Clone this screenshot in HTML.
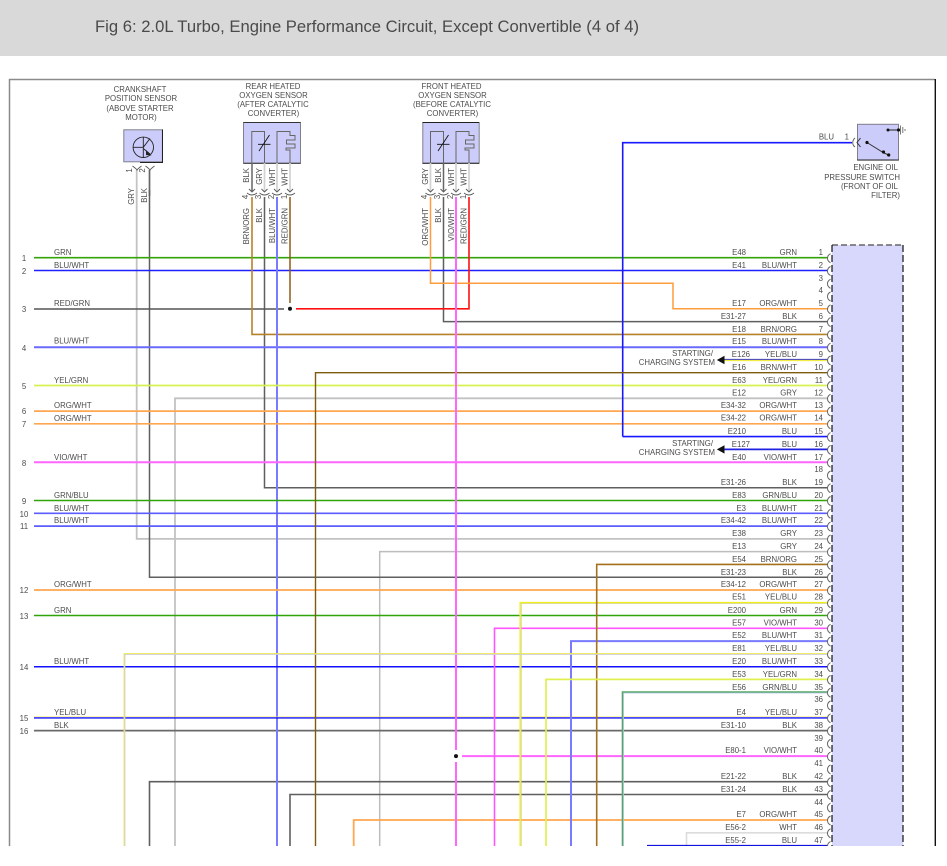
<!DOCTYPE html>
<html><head><meta charset="utf-8"><style>
html,body{margin:0;padding:0;background:#fff;width:947px;height:866px;overflow:hidden}
svg{display:block;position:absolute;left:0;top:0;filter:blur(.3px)}
text{font-family:"Liberation Sans",sans-serif;font-size:7.8px;fill:#4c4c4c}
.w{fill:none}
</style></head><body>
<svg width="947" height="866" viewBox="0 0 947 866" xmlns="http://www.w3.org/2000/svg">
<rect width="947" height="56" fill="#d9d9d9"/>
<text x="95" y="32" textLength="544" lengthAdjust="spacingAndGlyphs" style="font-size:17px;fill:#4a4a4a">Fig 6: 2.0L Turbo, Engine Performance Circuit, Except Convertible (4 of 4)</text>
<path d="M9.5 846V79.5H935" fill="none" stroke="#8a8a8a" stroke-width="1.5"/>
<path d="M935.3 79V846" stroke="#111" stroke-width="1.4"/>

<!-- module -->
<rect x="832" y="245" width="71" height="601" fill="#d8d8fc"/>
<path d="M832 245H903" stroke="#666" stroke-width="1.4" stroke-dasharray="6 3" fill="none"/>
<path d="M832 245V846M903 245V846" stroke="#111" stroke-width="1.2" stroke-dasharray="7 3" fill="none"/>

<!-- sensors -->
<rect x="123.800" y="129.800" width="38.600" height="32" fill="#ccccfa" stroke="#7f7f8a"/>
<path d="M162.500 129.500V162.500H140" stroke="#222" fill="none"/>
<rect x="243.500" y="122.500" width="57" height="40.800" fill="#ccccfa" stroke="#7f7f8a"/>
<path d="M243.500 122.500H300.500M243.500 163.300H300.500" stroke="#333" fill="none"/>
<rect x="422.800" y="122.500" width="56.400" height="40.800" fill="#ccccfa" stroke="#7f7f8a"/>
<path d="M422.500 122.500H479M422.500 163.300H479" stroke="#222" fill="none"/>
<rect x="857.500" y="124.300" width="41" height="35.800" fill="#ccccfa" stroke="#7f7f8a"/>
<path d="M857.300 160H898.700" stroke="#222" fill="none"/>

<!-- crank sensor symbol -->
<circle cx="143.300" cy="147.300" r="10.200" fill="none" stroke="#222" stroke-width=".9"/>
<path d="M143.300 137V157.500M133 147.300H143.300M143.300 147.300L150 138.500M143.300 148.500L150 154" stroke="#222" stroke-width=".9" fill="none"/>
<path d="M146 150L151.500 155.500L146 155Z" fill="#222"/>

<!-- O2 sensor interiors -->
<g fill="none" stroke="#666" stroke-width="1">
<path d="M251.800 163V131.500H264.500V163"/>
<path d="M277 163V131.500H290V135.500H295V140H286.500V144H295V148H286V150H290V163"/>
<path d="M430.500 163V131.500H443.500V163"/>
<path d="M456 163V131.500H469V135.500H474V140H465.500V144H474V148H465V150H469V163"/>
</g>
<g fill="none" stroke="#111" stroke-width=".9">
<path d="M258 144.300H270.500M259 151L269.500 135"/>
<path d="M437 144.300H449.500M438 151L448.500 135"/>
</g>
<!-- switch symbol -->
<path d="M867 142.500L884 153L888.700 155" stroke="#333" fill="none"/>
<path d="M888 130H898.500" stroke="#222" fill="none"/>
<path d="M860.500 138L857 142.500L860.500 147" stroke="#333" fill="none"/>
<circle cx="867" cy="142.500" r="1.600" fill="#111"/><circle cx="883.500" cy="152" r="1.600" fill="#111"/><circle cx="888.700" cy="155" r="1.600" fill="#111"/><circle cx="888" cy="130" r="1.500" fill="#111"/><circle cx="898.500" cy="130" r="1.600" fill="#111"/>
<path d="M900.500 125.500V134.500M902.800 127V133M905 129V131" stroke="#777" fill="none"/>

<!-- wires between sensors and connectors -->
<g fill="none" stroke="#d2d2d2" stroke-width="1.700">
<path d="M264.500 163V191M277 163V191M290 163V191M456 163V191M469 163V191M430.500 163V191"/>
</g>
<path d="M252 163V191M443.500 163V191" stroke="#666" stroke-width="1.500" fill="none"/>
<path d="M136.700 170V196" stroke="#c4c4c4" stroke-width="1.800"/>
<path d="M149.500 170V196" stroke="#666" stroke-width="1.700"/>

<!-- horizontal and vertical wires -->
<g class="w" stroke-linejoin="miter">
<path d="M136.700 190V538.900H828" stroke="#c2c2c2" stroke-width="1.800"/>
<path d="M175 846V398.300H828" stroke="#c2c2c2" stroke-width="1.800"/>
<path d="M379.700 846V551.600H828" stroke="#bdbdbd" stroke-width="1.500"/>
<path d="M686.500 846V832.800H828" stroke="#dcdcdc" stroke-width="1.600"/>
<path d="M149.500 190V577.200H828" stroke="#5f5f5f" stroke-width="1.500"/>
<path d="M264.500 197V487.700H828" stroke="#5f5f5f" stroke-width="1.500"/>
<path d="M443.500 197V321.600H828" stroke="#5f5f5f" stroke-width="1.500"/>
<path d="M149.500 846V781.700H828" stroke="#5f5f5f" stroke-width="1.600"/>
<path d="M290 846V794.500H828" stroke="#5f5f5f" stroke-width="1.600"/>
<path d="M34 730.600H828" stroke="#6a6a6a" stroke-width="1.700"/>

<path d="M34 257.700H828" stroke="#33a50a" stroke-width="1.600"/>
<path d="M34 270.500H828" stroke="#2020ff" stroke-width="1.500"/>
<path d="M34 309H284" stroke="#555" stroke-width="1.600"/>
<path d="M252 197V334.400H828" stroke="#b5812a" stroke-width="1.600"/>
<path d="M290 197V303" stroke="#8f5a14" stroke-width="1.500"/>
<path d="M296 308.800H469V197" stroke="#ff1010" stroke-width="1.600"/>
<path d="M430.500 197V283.300H673V308.800H828" stroke="#ff9c3c" stroke-width="1.500"/>
<path d="M34 347.200H828" stroke="#6a6aff" stroke-width="2"/>
<path d="M277 197V846" stroke="#7a7aff" stroke-width="2"/>
<path d="M34 385.500H828" stroke="#d8f050" stroke-width="1.700"/>
<path d="M34 411.100H828M34 423.800H828M34 590H828" stroke="#ffa650" stroke-width="1.700"/>
<path d="M353.700 846V820H828" stroke="#ffa650" stroke-width="1.800"/>
<path d="M34 462.200H828" stroke="#ff66ff" stroke-width="2"/>
<path d="M34 500.500H828M34 615.500H828" stroke="#2fa50a" stroke-width="1.600"/>
<path d="M34 513.300H828M34 526.100H828" stroke="#5c5cff" stroke-width="1.700"/>
<path d="M34 666.700H828" stroke="#1010ff" stroke-width="1.500"/>
<path d="M34 716.800H828" stroke="#f0e860" stroke-width=".6"/>
<path d="M34 717.900H828" stroke="#1414ff" stroke-width="1.400"/>
<path d="M622.700 436.600V142.700H852" stroke="#1818ff" stroke-width="1.600"/>
<path d="M622.700 436.600H828" stroke="#1818ff" stroke-width="1.600"/>
<path d="M724 449.400H828" stroke="#2020e0" stroke-width="1.700"/>
<path d="M724 360.500H828" stroke="#f0ec40" stroke-width="1.200"/>
<path d="M724 359.400H828" stroke="#3a3ab0" stroke-width="1"/>
<path d="M315.500 846V372.700H828" stroke="#7d5c10" stroke-width="1.400"/>
<path d="M456 197V750M456 762V846M462 756.100H828" stroke="#ff66ff" stroke-width="2"/>
<path d="M494.500 846V628.300H828" stroke="#ff55ff" stroke-width="1.600"/>
<path d="M521.100 846V603.400H828" stroke="#c4c4d8" stroke-width="1"/>
<path d="M520.200 846V602.600H828" stroke="#f0f020" stroke-width="1.500"/>
<path d="M571 846V641.100H828" stroke="#7a7aff" stroke-width="2"/>
<path d="M596.700 846V564.400H828" stroke="#a5701c" stroke-width="1.600"/>
<path d="M124.900 846V654.400H828" stroke="#c8c8e8" stroke-width=".9"/>
<path d="M124.100 846V653.600H828" stroke="#ecea50" stroke-width="1"/>
<path d="M546 846V679.400H828" stroke="#e0f050" stroke-width="1.700"/>
<path d="M623.400 846V692.900H828" stroke="#b0c0e8" stroke-width="1"/>
<path d="M622.400 846V691.900H828" stroke="#55a860" stroke-width="1.400"/>
<path d="M647 845.600H828" stroke="#1010e0" stroke-width="1.400"/>
</g>
<circle cx="290" cy="308.800" r="2" fill="#111"/>
<circle cx="456" cy="756.100" r="2" fill="#111"/>
<path d="M716.800 360L724.500 355.800V364.200Z" fill="#111"/>
<path d="M716.800 449.400L724.500 445.200V453.600Z" fill="#111"/>

<!-- sensor connectors -->
<g fill="none" stroke="#555" stroke-width=".9">
<path d="M132.500 166q4 3 4.500 4q.5-1 4.500-4M145.500 166q4 3 4.500 4q.5-1 4.500-4"/>
<path d="M249 189l3 3l3-3M247 193q5 4 10 0M261.500 189l3 3l3-3M259.500 193q5 4 10 0M274 189l3 3l3-3M272 193q5 4 10 0M287 189l3 3l3-3M285 193q5 4 10 0"/>
<path d="M427.500 189l3 3l3-3M425.500 193q5 4 10 0M440.500 189l3 3l3-3M438.500 193q5 4 10 0M453 189l3 3l3-3M451 193q5 4 10 0M466 189l3 3l3-3M464 193q5 4 10 0"/>
<path d="M855 138c-3 2.500-3 7 0 9"/>
</g>
<path fill="none" stroke="#666" stroke-width="1" d="M830.500 253.700c-4 2-4 7 0 9M830.500 266.500c-4 2-4 7 0 9M830.500 279.300c-4 2-4 7 0 9M830.500 292c-4 2-4 7 0 9M830.500 304.800c-4 2-4 7 0 9M830.500 317.600c-4 2-4 7 0 9M830.500 330.400c-4 2-4 7 0 9M830.500 343.200c-4 2-4 7 0 9M830.500 355.900c-4 2-4 7 0 9M830.500 368.700c-4 2-4 7 0 9M830.500 381.500c-4 2-4 7 0 9M830.500 394.300c-4 2-4 7 0 9M830.500 407.100c-4 2-4 7 0 9M830.500 419.800c-4 2-4 7 0 9M830.500 432.600c-4 2-4 7 0 9M830.500 445.400c-4 2-4 7 0 9M830.500 458.200c-4 2-4 7 0 9M830.500 471c-4 2-4 7 0 9M830.500 483.700c-4 2-4 7 0 9M830.500 496.500c-4 2-4 7 0 9M830.500 509.300c-4 2-4 7 0 9M830.500 522.100c-4 2-4 7 0 9M830.500 534.900c-4 2-4 7 0 9M830.500 547.600c-4 2-4 7 0 9M830.500 560.400c-4 2-4 7 0 9M830.500 573.200c-4 2-4 7 0 9M830.500 586c-4 2-4 7 0 9M830.500 598.800c-4 2-4 7 0 9M830.500 611.500c-4 2-4 7 0 9M830.500 624.300c-4 2-4 7 0 9M830.500 637.100c-4 2-4 7 0 9M830.500 649.900c-4 2-4 7 0 9M830.500 662.700c-4 2-4 7 0 9M830.500 675.400c-4 2-4 7 0 9M830.500 688.200c-4 2-4 7 0 9M830.500 701c-4 2-4 7 0 9M830.500 713.800c-4 2-4 7 0 9M830.500 726.600c-4 2-4 7 0 9M830.500 739.300c-4 2-4 7 0 9M830.500 752.100c-4 2-4 7 0 9M830.500 764.900c-4 2-4 7 0 9M830.500 777.700c-4 2-4 7 0 9M830.500 790.500c-4 2-4 7 0 9M830.500 803.200c-4 2-4 7 0 9M830.500 816c-4 2-4 7 0 9M830.500 828.800c-4 2-4 7 0 9M830.500 841.600c-4 2-4 7 0 9"/>

<!-- sensor titles -->
<g text-anchor="middle">
<text x="140" y="92">CRANKSHAFT</text><text x="141" y="101">POSITION SENSOR</text><text x="140" y="111">(ABOVE STARTER</text><text x="141" y="120">MOTOR)</text>
<text x="273" y="88.800">REAR HEATED</text><text x="273.500" y="98">OXYGEN SENSOR</text><text x="273" y="106.800">(AFTER CATALYTIC</text><text x="273.500" y="115.800">CONVERTER)</text>
<text x="451.500" y="88.800">FRONT HEATED</text><text x="452.500" y="98">OXYGEN SENSOR</text><text x="452" y="106.800">(BEFORE CATALYTIC</text><text x="452.500" y="115.800">CONVERTER)</text>
</g>
<g text-anchor="end">
<text x="898" y="169.800">ENGINE OIL</text><text x="900" y="180">PRESSURE SWITCH</text><text x="898" y="189">(FRONT OF OIL</text><text x="900" y="198">FILTER)</text>
<text x="834" y="139.500">BLU</text><text x="849" y="139.500">1</text>
<text x="713" y="356">STARTING/</text><text x="715" y="365">CHARGING SYSTEM</text>
<text x="713" y="446">STARTING/</text><text x="715" y="455">CHARGING SYSTEM</text>
</g>

<!-- rotated labels -->
<g text-anchor="end">
<text transform="translate(134 188) rotate(-90)">GRY</text><text transform="translate(147 188) rotate(-90)">BLK</text>
<text transform="translate(249 168) rotate(-90)">BLK</text><text transform="translate(262 168) rotate(-90)">GRY</text><text transform="translate(275 168) rotate(-90)">WHT</text><text transform="translate(287.500 168) rotate(-90)">WHT</text>
<text transform="translate(249 208) rotate(-90)">BRN/ORG</text><text transform="translate(262 208) rotate(-90)">BLK</text><text transform="translate(275 208) rotate(-90)">BLU/WHT</text><text transform="translate(287.500 208) rotate(-90)">RED/GRN</text>
<text transform="translate(428 168) rotate(-90)">GRY</text><text transform="translate(441 168) rotate(-90)">BLK</text><text transform="translate(454 168) rotate(-90)">WHT</text><text transform="translate(466.500 168) rotate(-90)">WHT</text>
<text transform="translate(428 208) rotate(-90)">ORG/WHT</text><text transform="translate(441 208) rotate(-90)">BLK</text><text transform="translate(454 208) rotate(-90)">VIO/WHT</text><text transform="translate(466.500 208) rotate(-90)">RED/GRN</text>
</g>
<g text-anchor="middle">
<text transform="translate(132 170.500) rotate(-90)">1</text><text transform="translate(145 170.500) rotate(-90)">2</text>
<text transform="translate(248 197) rotate(-90)">4</text><text transform="translate(261 197) rotate(-90)">3</text><text transform="translate(274 197) rotate(-90)">2</text><text transform="translate(287 197) rotate(-90)">1</text>
<text transform="translate(427 197) rotate(-90)">4</text><text transform="translate(440 197) rotate(-90)">3</text><text transform="translate(453 197) rotate(-90)">2</text><text transform="translate(466 197) rotate(-90)">1</text>
</g>

<!-- left numbers -->
<g text-anchor="middle">
<text x="24" y="260.800">1</text><text x="24" y="273.800">2</text><text x="24" y="311.800">3</text><text x="24" y="350.800">4</text><text x="24" y="388.800">5</text><text x="24" y="413.800">6</text><text x="24" y="426.800">7</text><text x="24" y="465.800">8</text><text x="24" y="503.800">9</text><text x="24" y="516.800">10</text><text x="24" y="528.800">11</text><text x="24" y="592.800">12</text><text x="24" y="618.800">13</text><text x="24" y="669.800">14</text><text x="24" y="720.800">15</text><text x="24" y="733.800">16</text>
</g>
<!-- left labels -->
<g>
<text x="54" y="254.800">GRN</text><text x="54" y="267.800">BLU/WHT</text><text x="54" y="305.800">RED/GRN</text><text x="54" y="343.500">BLU/WHT</text><text x="54" y="382.800">YEL/GRN</text><text x="54" y="407.800">ORG/WHT</text><text x="54" y="420.800">ORG/WHT</text><text x="54" y="459.800">VIO/WHT</text><text x="54" y="497.800">GRN/BLU</text><text x="54" y="510.800">BLU/WHT</text><text x="54" y="522.800">BLU/WHT</text><text x="54" y="586.800">ORG/WHT</text><text x="54" y="612.800">GRN</text><text x="54" y="663.800">BLU/WHT</text><text x="54" y="714.800">YEL/BLU</text><text x="54" y="727.800">BLK</text>
</g>
<!-- pin numbers -->
<g text-anchor="end">
<text x="823" y="255.100">1</text><text x="823" y="267.800">2</text><text x="823" y="280.800">3</text><text x="823" y="293.100">4</text><text x="823" y="305.800">5</text><text x="823" y="318.800">6</text><text x="823" y="331.800">7</text><text x="823" y="343.800">8</text><text x="823" y="356.800">9</text><text x="823" y="369.800">10</text><text x="823" y="382.800">11</text><text x="823" y="395.500">12</text><text x="823" y="407.800">13</text><text x="823" y="420.500">14</text><text x="823" y="433.800">15</text><text x="823" y="446.800">16</text><text x="823" y="459.800">17</text><text x="823" y="472.100">18</text><text x="823" y="484.800">19</text><text x="823" y="497.800">20</text><text x="823" y="510.800">21</text><text x="823" y="522.800">22</text><text x="823" y="535.800">23</text><text x="823" y="548.800">24</text><text x="823" y="561.800">25</text><text x="823" y="574.800">26</text><text x="823" y="586.800">27</text><text x="823" y="599.500">28</text><text x="823" y="612.800">29</text><text x="823" y="625.500">30</text><text x="823" y="637.800">31</text><text x="823" y="650.800">32</text><text x="823" y="663.800">33</text><text x="823" y="676.800">34</text><text x="823" y="689.800">35</text><text x="823" y="701.800">36</text><text x="823" y="714.800">37</text><text x="823" y="727.800">38</text><text x="823" y="740.800">39</text><text x="823" y="752.800">40</text><text x="823" y="765.800">41</text><text x="823" y="778.800">42</text><text x="823" y="791.800">43</text><text x="823" y="804.800">44</text><text x="823" y="816.800">45</text><text x="823" y="829.800">46</text><text x="823" y="842.800">47</text>
</g>
<!-- wire colours -->
<g text-anchor="end">
<text x="797" y="255.100">GRN</text><text x="797" y="267.800">BLU/WHT</text><text x="797" y="305.800">ORG/WHT</text><text x="797" y="318.800">BLK</text><text x="797" y="331.800">BRN/ORG</text><text x="797" y="343.800">BLU/WHT</text><text x="797" y="356.800">YEL/BLU</text><text x="797" y="369.800">BRN/WHT</text><text x="797" y="382.800">YEL/GRN</text><text x="797" y="395.500">GRY</text><text x="797" y="407.800">ORG/WHT</text><text x="797" y="420.500">ORG/WHT</text><text x="797" y="433.800">BLU</text><text x="797" y="446.800">BLU</text><text x="797" y="459.800">VIO/WHT</text><text x="797" y="484.800">BLK</text><text x="797" y="497.800">GRN/BLU</text><text x="797" y="510.800">BLU/WHT</text><text x="797" y="522.800">BLU/WHT</text><text x="797" y="535.800">GRY</text><text x="797" y="548.800">GRY</text><text x="797" y="561.800">BRN/ORG</text><text x="797" y="574.800">BLK</text><text x="797" y="586.800">ORG/WHT</text><text x="797" y="599.500">YEL/BLU</text><text x="797" y="612.800">GRN</text><text x="797" y="625.500">VIO/WHT</text><text x="797" y="637.800">BLU/WHT</text><text x="797" y="650.800">YEL/BLU</text><text x="797" y="663.800">BLU/WHT</text><text x="797" y="676.800">YEL/GRN</text><text x="797" y="689.800">GRN/BLU</text><text x="797" y="714.800">YEL/BLU</text><text x="797" y="727.800">BLK</text><text x="797" y="752.800">VIO/WHT</text><text x="797" y="778.800">BLK</text><text x="797" y="791.800">BLK</text><text x="797" y="816.800">ORG/WHT</text><text x="797" y="829.800">WHT</text><text x="797" y="842.800">BLU</text>
</g>
<!-- E codes -->
<g text-anchor="end">
<text x="746" y="255.100">E48</text><text x="746" y="267.800">E41</text><text x="746" y="305.800">E17</text><text x="746" y="318.800">E31-27</text><text x="746" y="331.800">E18</text><text x="746" y="343.800">E15</text><text x="750" y="356.800">E126</text><text x="746" y="369.800">E16</text><text x="746" y="382.800">E63</text><text x="746" y="395.500">E12</text><text x="746" y="407.800">E34-32</text><text x="746" y="420.500">E34-22</text><text x="746" y="433.800">E210</text><text x="750" y="446.800">E127</text><text x="746" y="459.800">E40</text><text x="746" y="484.800">E31-26</text><text x="746" y="497.800">E83</text><text x="746" y="510.800">E3</text><text x="746" y="522.800">E34-42</text><text x="746" y="535.800">E38</text><text x="746" y="548.800">E13</text><text x="746" y="561.800">E54</text><text x="746" y="574.800">E31-23</text><text x="746" y="586.800">E34-12</text><text x="746" y="599.500">E51</text><text x="746" y="612.800">E200</text><text x="746" y="625.500">E57</text><text x="746" y="637.800">E52</text><text x="746" y="650.800">E81</text><text x="746" y="663.800">E20</text><text x="746" y="676.800">E53</text><text x="746" y="689.800">E56</text><text x="746" y="714.800">E4</text><text x="746" y="727.800">E31-10</text><text x="746" y="752.800">E80-1</text><text x="746" y="778.800">E21-22</text><text x="746" y="791.800">E31-24</text><text x="746" y="816.800">E7</text><text x="746" y="829.800">E56-2</text><text x="746" y="842.800">E55-2</text>
</g>
<rect x="0" y="846" width="947" height="20" fill="#fff"/>
</svg>
</body></html>
